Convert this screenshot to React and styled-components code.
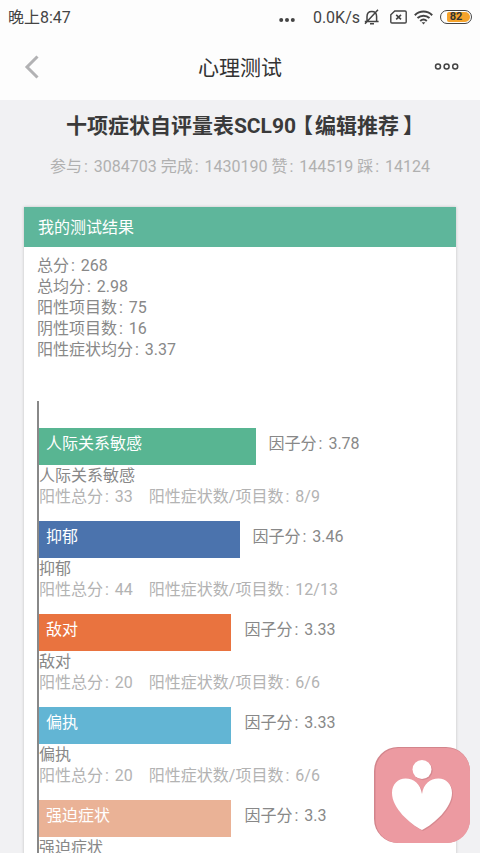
import React from "react";
import styled, { createGlobalStyle } from "styled-components";

const GlobalStyle = createGlobalStyle`
  * {
    box-sizing: border-box;
  }
  body {
    margin: 0;
    background-color: #f1f1f3;
    color: #888888;
    font-family: Roboto, "Noto Sans CJK SC", sans-serif;
    font-size: 16px;
    line-height: 21px;
  }
  ::-webkit-scrollbar {
    display: none;
  }
`;

const Container = styled.div`
  min-height: 100vh;
`;

const Header = styled.header`
  background-color: #fdfdfd;
`;

const StatusBar = styled.div`
  height: 34px;
  padding: 0 8px;
  display: flex;
  align-items: center;
  justify-content: space-between;
  color: #444444;
`;

const StatusIcons = styled.div`
  display: flex;
  align-items: center;
`;

const Speed = styled.span`
  margin: 0 4px 0 18px;
`;

const Icon = styled.svg`
  display: block;
  fill: none;
  stroke: #444444;
  margin-right: ${(props) => props.$gap || 0}px;
`;

const Battery = styled.div`
  width: 32px;
  height: 14px;
  padding: 1px;
  border: 1px solid #444444;
  border-radius: 7px;
  display: flex;
`;

const BatteryLevel = styled.span`
  flex: 1;
  border-radius: 2px 5px 5px 2px;
  margin-left: 5px;
  padding-right: 5px;
  background-color: #f5a32c;
  color: #333333;
  font-size: 11px;
  font-weight: 700;
  line-height: 10px;
  text-align: center;
`;

const NavBar = styled.nav`
  height: 66px;
  padding: 0 20px;
  display: grid;
  grid-template-columns: 1fr auto 1fr;
  align-items: center;
`;

const NavButton = styled.button`
  padding: 0;
  border: none;
  background: none;
  justify-self: ${(props) => props.$side};
`;

const NavTitle = styled.h1`
  margin: 0;
  padding-top: 2px;
  color: #333333;
  font-size: 21px;
  font-weight: 400;
  line-height: 28px;
`;

const Main = styled.main`
  padding: 12px 24px 0;
`;

const Title = styled.h2`
  margin: 0;
  color: #3a3a3a;
  font-size: 21px;
  font-weight: 700;
  line-height: 28px;
  text-align: center;
  white-space: nowrap;
`;

const OpenBracket = styled.span`
  margin: 0 2px 0 -4px;
`;

const CloseBracket = styled.span`
  margin: 0 -10px 0 4px;
`;

const Stats = styled.p`
  margin: 16px 0 30px;
  color: #b0b0b0;
  text-align: center;
  white-space: nowrap;
`;

const Card = styled.section`
  background-color: #ffffff;
  box-shadow: 0 0 3px rgba(0, 0, 0, 0.2);
`;

const CardTitle = styled.h3`
  margin: 0;
  padding: 2px 14px 0;
  background-color: #5eb69b;
  color: #ffffff;
  font-size: 16px;
  font-weight: 400;
  line-height: 38px;
`;

const CardBody = styled.div`
  padding: 8px 16px 0 13px;
`;

const Summary = styled.ul`
  margin: 0 0 41px;
  padding: 0;
  list-style: none;
`;

const Chart = styled.div`
  padding-top: 27px;
  border-left: 2px solid #888888;
`;

const Factor = styled.div`
  margin-bottom: 14px;
`;

const FactorRow = styled.div`
  height: 37px;
  display: flex;
`;

const Bar = styled.div`
  padding: 5px 7px;
  background-color: ${(props) => props.$color};
  color: #ffffff;
`;

const Score = styled.span`
  padding: 5px 0 0 13px;
`;

const Detail = styled.div`
  display: flex;
  gap: 16px;
  color: #b3b3b3;
`;

const Colon = styled.span`
  margin: 0 2px;
`;

const FloatButton = styled.button`
  position: fixed;
  right: 10px;
  bottom: 10px;
  padding: 0;
  border: none;
  border-radius: 24px;
  background: none;
`;

const FloatIcon = styled.svg`
  display: block;
`;

const stats = [
  ["参与", 3084703],
  ["完成", 1430190],
  ["赞", 144519],
  ["踩", 14124],
];

const summary = [
  ["总分", "268"],
  ["总均分", "2.98"],
  ["阳性项目数", "75"],
  ["阴性项目数", "16"],
  ["阳性症状均分", "3.37"],
];

const factors = [
  { name: "人际关系敏感", score: "3.78", width: 54, color: "#58b592", total: 33, ratio: "8/9" },
  { name: "抑郁", score: "3.46", width: 50, color: "#4b73ad", total: 44, ratio: "12/13" },
  { name: "敌对", score: "3.33", width: 48, color: "#e9733f", total: 20, ratio: "6/6" },
  { name: "偏执", score: "3.33", width: 48, color: "#62b5d4", total: 20, ratio: "6/6" },
  { name: "强迫症状", score: "3.3", width: 48, color: "#eab296" },
];

const Pair = ({ label, value }) => (
  <>
    {label}
    <Colon>:</Colon> {value}
  </>
);

const FactorItem = ({ factor }) => (
  <Factor>
    <FactorRow>
      <Bar $color={factor.color} style={{ width: `${factor.width}%` }}>
        {factor.name}
      </Bar>
      <Score>
        <Pair label="因子分" value={factor.score} />
      </Score>
    </FactorRow>
    <div>{factor.name}</div>
    {factor.ratio && (
      <Detail>
        <span>
          <Pair label="阳性总分" value={factor.total} />
        </span>
        <span>
          <Pair label="阳性症状数/项目数" value={factor.ratio} />
        </span>
      </Detail>
    )}
  </Factor>
);

const App = () => (
  <Container>
    <GlobalStyle />
    <Header>
      <StatusBar>
        <span>晚上8:47</span>
        <StatusIcons>
          <Icon width="16" height="10" viewBox="0 0 16 10">
            <g fill="#444444" stroke="none">
              <circle cx="2.2" cy="8" r="2" />
              <circle cx="8" cy="8" r="2" />
              <circle cx="13.8" cy="8" r="2" />
            </g>
          </Icon>
          <Speed>0.0K/s</Speed>
          <Icon width="16" height="16" viewBox="0 0 16 16" strokeWidth="1.5" $gap={10}>
            <path d="M0.8 12.6H14.6M3 12.3V7.4C3 4.4 5 2.4 7.8 2.4S12.6 4.4 12.6 7.4V12.3M6 14.8H10M1 14.8L14 0.8" />
          </Icon>
          <Icon width="17" height="14" viewBox="0 0 17 14" strokeWidth="1.4" $gap={7}>
            <path d="M4.8 1H15C15.7 1 16.2 1.4 16.2 2V12C16.2 12.6 15.7 13 15 13H2C1.3 13 0.8 12.6 0.8 12V4.8Z" />
            <path d="M6.2 4.8L11 9.4M11 4.8L6.2 9.4" strokeWidth="1.6" />
          </Icon>
          <Icon width="19" height="15" viewBox="0 0 19 15" strokeWidth="2" $gap={7}>
            <path d="M0.8 5.2C5.8 0.4 13.2 0.4 18.2 5.2M3.5 8.1C7 4.9 12 4.9 15.5 8.1M6.2 10.9C8.2 9.2 10.8 9.2 12.8 10.9" />
            <path d="M7.6 12.3H11.4L9.5 14.6Z" fill="#444444" stroke="none" />
          </Icon>
          <Battery>
            <BatteryLevel>82</BatteryLevel>
          </Battery>
        </StatusIcons>
      </StatusBar>
      <NavBar>
        <NavButton $side="start" aria-label="返回">
          <Icon width="24" height="24" viewBox="0 0 24 24">
            <path d="M17.5 1.5L7 12L17.5 22.5" stroke="#b2b2b4" strokeWidth="3" />
          </Icon>
        </NavButton>
        <NavTitle>心理测试</NavTitle>
        <NavButton $side="end" aria-label="更多">
          <Icon width="26" height="8" viewBox="0 0 26 8" strokeWidth="1.5">
            <circle cx="4" cy="3.5" r="2.5" />
            <circle cx="12.6" cy="3.5" r="2.5" />
            <circle cx="21.2" cy="3.5" r="2.5" />
          </Icon>
        </NavButton>
      </NavBar>
    </Header>
    <Main>
      <Title>
        十项症状自评量表SCL90<OpenBracket>【</OpenBracket>编辑推荐
        <CloseBracket>】</CloseBracket>
      </Title>
      <Stats>
        {stats.map(([label, value]) => (
          <React.Fragment key={label}>
            <Pair label={label} value={value} />{" "}
          </React.Fragment>
        ))}
      </Stats>
      <Card>
        <CardTitle>我的测试结果</CardTitle>
        <CardBody>
          <Summary>
            {summary.map(([label, value]) => (
              <li key={label}>
                <Pair label={label} value={value} />
              </li>
            ))}
          </Summary>
          <Chart>
            {factors.map((factor) => (
              <FactorItem key={factor.name} factor={factor} />
            ))}
          </Chart>
        </CardBody>
      </Card>
    </Main>
    <FloatButton aria-label="心理测试">
      <FloatIcon width="96" height="96" viewBox="0 0 96 96">
        <rect width="96" height="96" rx="24" fill="#d2858c" />
        <rect x="1.5" y="1" width="94.5" height="95" rx="23" fill="#ec9aa1" />
        <g fill="#c97f86" opacity="0.6" transform="translate(1 1)">
          <circle cx="48" cy="22.5" r="9.7" />
          <path d="M48 83C36 77 18 61 18 46C18 37 24 31.5 31.5 31.5C40 31.5 46.5 37 48 47C49.5 37 56 31.5 64.5 31.5C72 31.5 78 37 78 46C78 61 60 77 48 83Z" />
        </g>
        <g fill="#ffffff">
          <circle cx="48" cy="22.5" r="9.5" />
          <path d="M48 83C36 77 18 61 18 46C18 37 24 31.5 31.5 31.5C40 31.5 46.5 37 48 47C49.5 37 56 31.5 64.5 31.5C72 31.5 78 37 78 46C78 61 60 77 48 83Z" />
        </g>
      </FloatIcon>
    </FloatButton>
  </Container>
);

export default App;
